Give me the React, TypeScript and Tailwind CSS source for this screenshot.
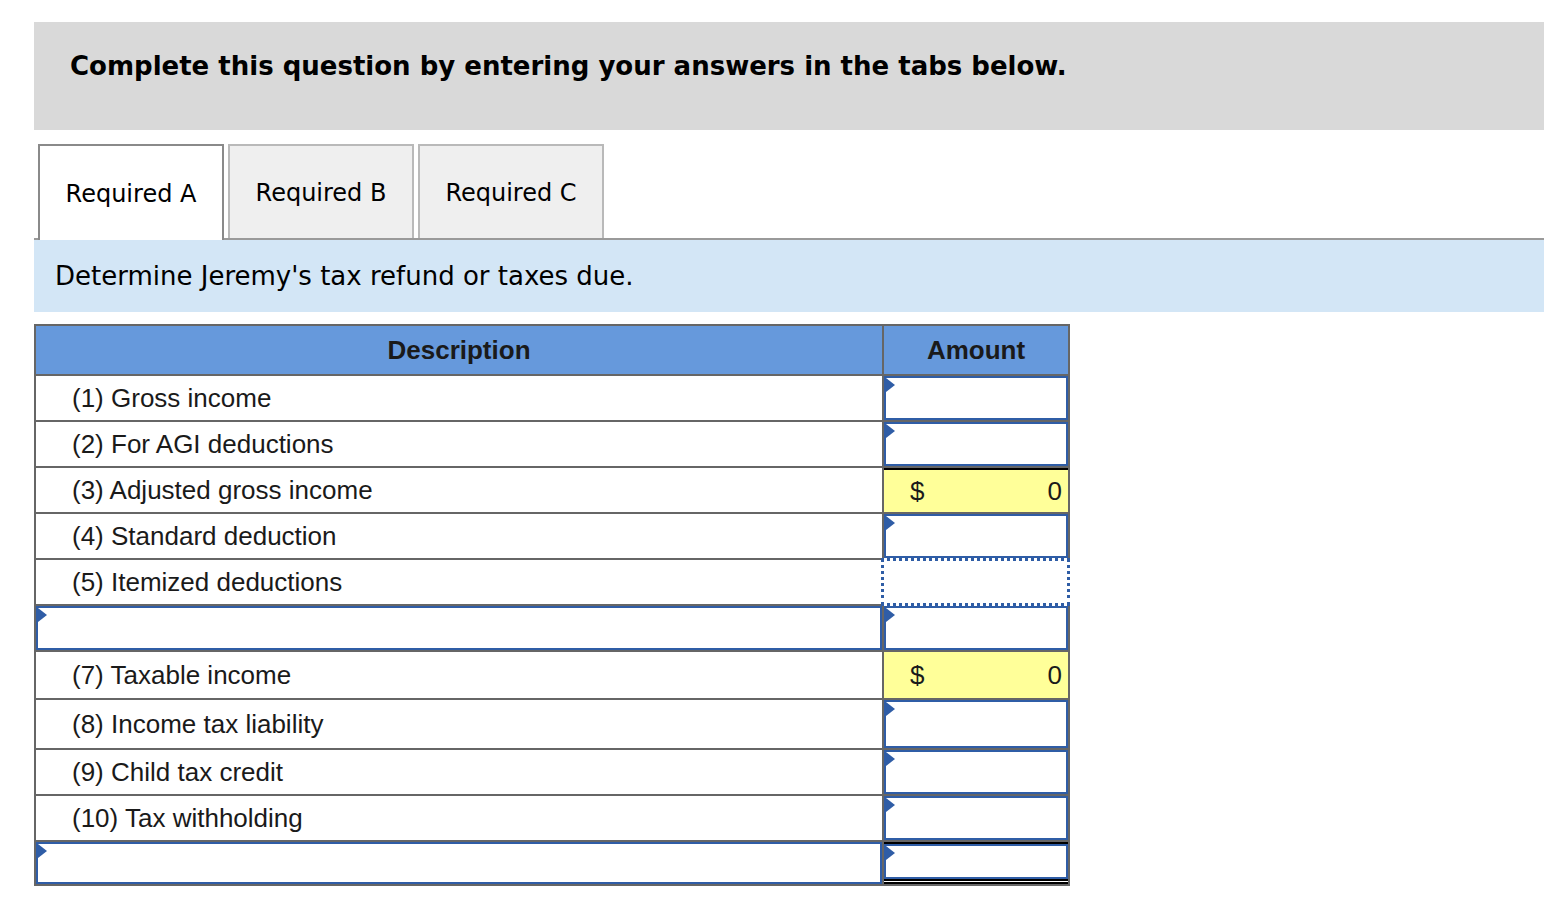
import React from "react";

type Row = {
  label?: string;
  kind: "input" | "total" | "dotted" | "blank";
  h: string;
  topBlack?: boolean;
  doubleBottom?: boolean;
};

const rows: Row[] = [
  { label: "(1) Gross income", kind: "input", h: "h-[46px]" },
  { label: "(2) For AGI deductions", kind: "input", h: "h-[46px]" },
  { label: "(3) Adjusted gross income", kind: "total", h: "h-[46px]", topBlack: true },
  { label: "(4) Standard deduction", kind: "input", h: "h-[46px]" },
  { label: "(5) Itemized deductions", kind: "dotted", h: "h-[46px]" },
  { kind: "blank", h: "h-[46px]" },
  { label: "(7) Taxable income", kind: "total", h: "h-[48px]" },
  { label: "(8) Income tax liability", kind: "input", h: "h-[50px]" },
  { label: "(9) Child tax credit", kind: "input", h: "h-[46px]" },
  { label: "(10) Tax withholding", kind: "input", h: "h-[46px]" },
  { kind: "blank", h: "h-[42px]", topBlack: true, doubleBottom: true },
];

function Flag() {
  return (
    <span className="absolute left-0 top-0 h-0 w-0 border-y-[7px] border-l-[9px] border-y-transparent border-l-[#2f5da6]" />
  );
}

function InputBox() {
  return (
    <div className="relative h-full w-full border-2 border-[#2f5da6] bg-white">
      <Flag />
    </div>
  );
}

function AmountCell({ row }: { row: Row }) {
  if (row.kind === "total") {
    return (
      <div className="flex h-full w-full items-center justify-between bg-[#ffff99] pl-[26px] pr-[6px] text-[26px] text-[#1a1a1a]">
        <span>$</span>
        <span>0</span>
      </div>
    );
  }
  if (row.kind === "dotted") {
    return (
      <div className="-mx-[3px] -my-[2px] h-[calc(100%+4px)] w-[calc(100%+5px)] border-[3px] border-dotted border-[#2f5da6] bg-white" />
    );
  }
  return <InputBox />;
}

export default function App() {
  return (
    <div className="min-h-[902px] w-[1544px] bg-white pt-[22px] font-['DejaVu_Sans',Verdana,sans-serif] text-black">
      <div className="ml-[34px] h-[108px] bg-[#d9d9d9] pl-[36px] pt-[29px] text-[26px] font-bold leading-[30px]">
        Complete this question by entering your answers in the tabs below.
      </div>

      <div className="ml-[34px] mt-[14px] flex gap-[4px] border-b-2 border-[#9a9a9a] pl-[4px]">
        <div className="-mb-[2px] flex h-[96px] w-[186px] items-center justify-center border-2 border-b-0 border-[#8a8a8a] bg-white pt-[2px] text-[24px]">
          Required A
        </div>
        <div className="flex h-[94px] w-[186px] items-center justify-center border-2 border-b-0 border-[#b9b9b9] bg-[#efefef] pt-[2px] text-[24px]">
          Required B
        </div>
        <div className="flex h-[94px] w-[186px] items-center justify-center border-2 border-b-0 border-[#b9b9b9] bg-[#efefef] pt-[2px] text-[24px]">
          Required C
        </div>
      </div>

      <div className="ml-[34px] flex h-[72px] items-center bg-[#d3e6f6] pl-[21px] text-[26px]">
        Determine Jeremy's tax refund or taxes due.
      </div>

      <div className="ml-[34px] mt-[12px] w-[1036px] border-2 border-[#666] font-['Liberation_Sans',Arial,sans-serif] text-[26px] text-[#1a1a1a]">
        <div className="flex h-[50px] border-b-2 border-[#666] bg-[#6699dc] font-bold">
          <div className="flex w-[848px] items-center justify-center border-r-2 border-[#666]">Description</div>
          <div className="flex w-[184px] items-center justify-center">Amount</div>
        </div>
        {rows.map((row, i) => (
          <div
            key={i}
            className={`flex ${row.h} ${i < rows.length - 1 ? "border-b-2 border-[#666]" : ""}`}
          >
            <div className="flex w-[848px] items-center border-r-2 border-[#666]">
              {row.kind === "blank" ? (
                <InputBox />
              ) : (
                <span className="pl-[36px]">{row.label}</span>
              )}
            </div>
            <div
              className={`relative w-[184px] ${row.topBlack ? "border-t-2 border-black" : ""} ${
                row.doubleBottom ? "border-b-[5px] border-double border-black" : ""
              }`}
            >
              <AmountCell row={row} />
            </div>
          </div>
        ))}
      </div>
    </div>
  );
}
